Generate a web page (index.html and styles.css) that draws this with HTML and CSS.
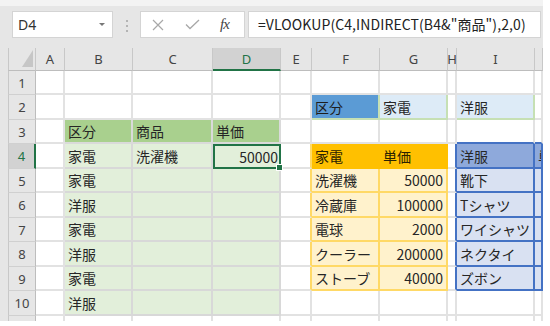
FILE: index.html
```html
<!DOCTYPE html>
<html lang="ja">

<head>
    <meta charset="UTF-8">
    <title>VLOOKUP INDIRECT</title>
    <link rel="stylesheet" href="styles.css">
</head>

<body>
    <div class="excel">
        <div class="ribbonEdge"></div>
        <div class="formulaBar">
            <div class="nameBox"><span>D4</span><span class="caret"></span></div>
            <div class="grip"><i></i><i></i><i></i></div>
            <div class="fxTools">
                <svg class="cancelIcon" width="12" height="12" viewBox="0 0 12 12">
                    <path d="M1 1L11 11M11 1L1 11" stroke="#a8a8a8" stroke-width="1.2" fill="none" />
                </svg>
                <svg class="enterIcon" width="15" height="11" viewBox="0 0 15 11">
                    <path d="M1 5.5L5 9.5L14 1" stroke="#a8a8a8" stroke-width="1.3" fill="none" />
                </svg>
                <span class="fx">fx</span>
            </div>
            <div class="formula">=VLOOKUP(C4,INDIRECT(B4&amp;"商品"),2,0)</div>
        </div>

        <div class="sheet">
            <!-- column headers -->
            <div class="corner"><span class="selectAll"></span></div>
            <div class="hdr">A</div>
            <div class="hdr">B</div>
            <div class="hdr">C</div>
            <div class="hdr active">D</div>
            <div class="hdr">E</div>
            <div class="hdr">F</div>
            <div class="hdr">G</div>
            <div class="hdr">H</div>
            <div class="hdr">I</div>
            <div class="hdr"></div>

            <!-- row 1 -->
            <div class="rh">1</div>
            <div class="c"></div><div class="c"></div><div class="c"></div><div class="c"></div><div class="c"></div>
            <div class="c"></div><div class="c"></div><div class="c"></div><div class="c"></div><div class="c"></div>

            <!-- row 2 -->
            <div class="rh">2</div>
            <div class="c"></div><div class="c"></div><div class="c"></div><div class="c"></div><div class="c"></div>
            <div class="c key">区分</div>
            <div class="c keyVal">家電</div>
            <div class="c"></div>
            <div class="c keyVal">洋服</div>
            <div class="c"></div>

            <!-- row 3 -->
            <div class="rh">3</div>
            <div class="c"></div>
            <div class="c gHead">区分</div>
            <div class="c gHead">商品</div>
            <div class="c gHead">単価</div>
            <div class="c"></div>
            <div class="c"></div>
            <div class="c"></div>
            <div class="c"></div>
            <div class="c blueTop"></div>
            <div class="c blueTop"></div>

            <!-- row 4 -->
            <div class="rh active">4</div>
            <div class="c"></div>
            <div class="c gBody">家電</div>
            <div class="c gBody">洗濯機</div>
            <div class="c gBody num selected">50000<span class="fillHandle"></span></div>
            <div class="c yLeft"></div>
            <div class="c oHead">家電</div>
            <div class="c oHead">単価</div>
            <div class="c bLeft"></div>
            <div class="c bHead">洋服</div>
            <div class="c bHead">単</div>

            <!-- row 5 -->
            <div class="rh">5</div>
            <div class="c"></div>
            <div class="c gBody">家電</div>
            <div class="c gBody"></div>
            <div class="c gBody"></div>
            <div class="c yLeft"></div>
            <div class="c oBody">洗濯機</div>
            <div class="c oBody num">50000</div>
            <div class="c bLeft"></div>
            <div class="c bBody">靴下</div>
            <div class="c bBody"></div>

            <!-- row 6 -->
            <div class="rh">6</div>
            <div class="c"></div>
            <div class="c gBody">洋服</div>
            <div class="c gBody"></div>
            <div class="c gBody"></div>
            <div class="c yLeft"></div>
            <div class="c oBody">冷蔵庫</div>
            <div class="c oBody num">100000</div>
            <div class="c bLeft"></div>
            <div class="c bBody">Tシャツ</div>
            <div class="c bBody"></div>

            <!-- row 7 -->
            <div class="rh">7</div>
            <div class="c"></div>
            <div class="c gBody">家電</div>
            <div class="c gBody"></div>
            <div class="c gBody"></div>
            <div class="c yLeft"></div>
            <div class="c oBody">電球</div>
            <div class="c oBody num">2000</div>
            <div class="c bLeft"></div>
            <div class="c bBody">ワイシャツ</div>
            <div class="c bBody"></div>

            <!-- row 8 -->
            <div class="rh">8</div>
            <div class="c"></div>
            <div class="c gBody">洋服</div>
            <div class="c gBody"></div>
            <div class="c gBody"></div>
            <div class="c yLeft"></div>
            <div class="c oBody">クーラー</div>
            <div class="c oBody num">200000</div>
            <div class="c bLeft"></div>
            <div class="c bBody">ネクタイ</div>
            <div class="c bBody"></div>

            <!-- row 9 -->
            <div class="rh">9</div>
            <div class="c"></div>
            <div class="c gBody">家電</div>
            <div class="c gBody"></div>
            <div class="c gBody"></div>
            <div class="c yLeft"></div>
            <div class="c oBody">ストーブ</div>
            <div class="c oBody num">40000</div>
            <div class="c bLeft"></div>
            <div class="c bBody">ズボン</div>
            <div class="c bBody"></div>

            <!-- row 10 -->
            <div class="rh">10</div>
            <div class="c"></div>
            <div class="c gBody">洋服</div>
            <div class="c gBody"></div>
            <div class="c gBody"></div>
            <div class="c"></div><div class="c"></div><div class="c"></div><div class="c"></div><div class="c"></div><div class="c"></div>

            <!-- row 11, only its top edge shows -->
            <div class="rh"></div>
            <div class="c"></div><div class="c"></div><div class="c"></div><div class="c"></div><div class="c"></div>
            <div class="c"></div><div class="c"></div><div class="c"></div><div class="c"></div><div class="c"></div>
        </div>
    </div>
</body>

</html>
```

FILE: styles.css
```css
body {
    margin: 0;
    padding: 0;
    background: #fff;
    font-family: "Noto Sans CJK JP", sans-serif;
}

.excel {
    width: 543px;
    height: 321px;
    overflow: hidden;
    background: #e6e6e6;
}

.ribbonEdge {
    height: 6px;
    background: #f3f3f3;
}

/* formula bar */

.formulaBar {
    display: flex;
    align-items: flex-start;
    height: 42px;
    padding: 5px 2px 0 12px;
    box-sizing: border-box;
}

.nameBox {
    width: 101px;
    height: 27px;
    box-sizing: border-box;
    background: #fff;
    border: 1px solid #d4d4d4;
    display: flex;
    align-items: center;
    justify-content: space-between;
    padding: 0 7px 0 5px;
    font-family: "Noto Sans", sans-serif;
    font-size: 14px;
    color: #333;
}

.caret {
    border-left: 3px solid transparent;
    border-right: 3px solid transparent;
    border-top: 3px solid #777;
}

.grip {
    width: 27px;
    display: flex;
    flex-direction: column;
    align-items: center;
    gap: 3px;
    padding-top: 9px;
}

.grip i {
    width: 2px;
    height: 2px;
    background: #b4b4b4;
}

.fxTools {
    width: 105px;
    height: 27px;
    box-sizing: border-box;
    margin-right: 3px;
    background: #fff;
    border: 1px solid #d4d4d4;
    display: flex;
    align-items: center;
}

.cancelIcon {
    margin-left: 11px;
}

.enterIcon {
    margin-left: 21px;
}

.fx {
    margin-left: 20px;
    font-family: "Liberation Serif", serif;
    font-style: italic;
    font-size: 15px;
    color: #444;
    letter-spacing: -1px;
}

.formula {
    flex: 1;
    height: 27px;
    box-sizing: border-box;
    background: #fff;
    border: 1px solid #d4d4d4;
    padding-left: 9px;
    font-size: 14px;
    letter-spacing: 0.1px;
    line-height: 25px;
    color: #222;
    white-space: nowrap;
    overflow: hidden;
}

/* grid */

.sheet {
    display: grid;
    grid-template-columns: 28px 29px 68px 80px 68px 31px 68px 68px 9px 78px 8px;
    grid-template-rows: 23px repeat(5, 24px 25px) 24px;
    padding-left: 8px;
}

.corner,
.hdr,
.rh {
    box-sizing: border-box;
    background: #e6e6e6;
    border-right: 1px solid #c8c8c8;
    border-bottom: 1px solid #bdbdbd;
    font-family: "Noto Sans", sans-serif;
    font-size: 13px;
    color: #444;
    display: flex;
    align-items: center;
    justify-content: center;
}

.corner {
    position: relative;
    border-left: 1px solid #c8c8c8;
}

.selectAll {
    position: absolute;
    right: 2px;
    bottom: 3px;
    border-left: 11px solid transparent;
    border-bottom: 17px solid #c6c6c6;
}

.rh {
    border-left: 1px solid #c8c8c8;
    border-bottom-color: #d0d0d0;
    border-right-color: #bdbdbd;
}

.hdr.active {
    background: #d2d2d2;
    color: #217346;
    border-bottom: 2px solid #217346;
}

.rh.active {
    background: #d2d2d2;
    color: #217346;
    border-right: 2px solid #217346;
}

.c {
    box-sizing: border-box;
    background: #fff;
    border-right: 2px solid #e2e2e2;
    border-bottom: 2px solid #e2e2e2;
    display: flex;
    align-items: center;
    padding: 0 3px;
    font-size: 14px;
    color: #262626;
    white-space: nowrap;
    overflow: hidden;
}

.num {
    justify-content: flex-end;
}

/* green input table */

.gHead {
    background: #a9d08e;
    border-color: #dadada;
}

.gBody {
    background: #e2efda;
    border-color: #d8d8d8;
}

.selected {
    position: relative;
    overflow: visible;
    border: 2px solid #217346;
    padding-right: 1px;
}

.fillHandle {
    position: absolute;
    right: -4px;
    bottom: -4px;
    width: 5px;
    height: 5px;
    background: #217346;
    border: 1px solid #fff;
}

/* lookup keys */

.key {
    background: #5b9bd5;
    border-color: #c6e0b4;
    color: #1e1e1e;
}

.keyVal {
    background: #ddebf7;
    border-color: #c6e0b4;
}

/* orange table */

.yLeft {
    border-right-color: #ffd966;
}

.oHead {
    background: #ffc000;
    border-color: #ffc000;
    color: #2a2200;
}

.oBody {
    background: #fff2cc;
    border-color: #ffd966;
}

/* blue table */

.blueTop {
    border-bottom-color: #4472c4;
}

.bLeft {
    border-right-color: #4472c4;
}

.bHead {
    background: #8ea9db;
    border-color: #4472c4;
}

.bBody {
    background: #d9e1f2;
    border-color: #4472c4;
}
```
